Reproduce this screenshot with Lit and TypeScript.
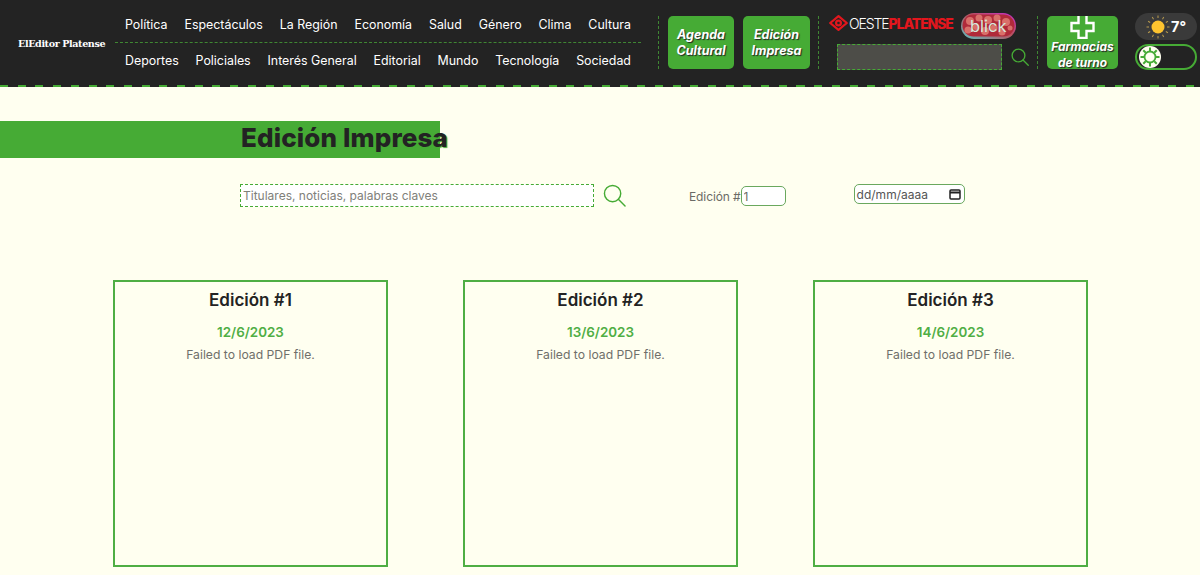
import { LitElement, html, css, svg } from 'lit';
import { customElement } from 'lit/decorators.js';

const rowOne = ['Política', 'Espectáculos', 'La Región', 'Economía', 'Salud', 'Género', 'Clima', 'Cultura'];
const rowTwo = ['Deportes', 'Policiales', 'Interés General', 'Editorial', 'Mundo', 'Tecnología', 'Sociedad'];

const editions = [
  { n: 1, date: '12/6/2023' },
  { n: 2, date: '13/6/2023' },
  { n: 3, date: '14/6/2023' },
];

const lens = (size: number, width: number) => html`
  <svg width=${size} height=${size} viewBox="0 0 24 24" fill="none" stroke="#46ab35" stroke-width=${width} stroke-linecap="round">
    <circle cx="10" cy="10" r="8.5"></circle>
    <path d="M16 16l7 7"></path>
  </svg>
`;

const eightRays = [0, 45, 90, 135, 180, 225, 270, 315];
const twelveRays = [0, 30, 60, 90, 120, 150, 180, 210, 240, 270, 300, 330];

// blobs of the blick pill, x / y / radius
const blobs = [
  [9, 8, 4], [18, 5, 3.5], [27, 7, 4], [36, 5, 3.5], [45, 9, 4],
  [7, 17, 3.5], [15, 14, 3], [24, 18, 4], [33, 15, 3.5], [41, 19, 3.5], [49, 15, 2.5],
];

@customElement('app-root')
export class AppRoot extends LitElement {
  static styles = css`
    :host {
      display: block;
      height: 575px;
      overflow: hidden;
      background: #fffff0;
      font-family: 'Inter', 'Liberation Sans', sans-serif;
    }

    .header {
      display: flex;
      height: 85px;
      background: #232323;
    }

    .stripe {
      height: 2px;
      background: repeating-linear-gradient(90deg, #46ab35 0 8px, #232323 8px 17.7px);
    }

    .brand {
      width: 115px;
      flex: none;
      box-sizing: border-box;
      padding: 37px 0 0 18px;
      font-family: 'DejaVu Serif', 'Liberation Serif', serif;
      font-weight: 700;
      font-size: 9.6px;
      letter-spacing: -0.4px;
      line-height: 13px;
      color: #fff;
      white-space: nowrap;
    }

    .nav {
      width: 526px;
      flex: none;
    }

    .nav-row {
      display: flex;
      justify-content: space-between;
      align-items: center;
      height: 36px;
      padding: 0 10px;
      margin-top: 6px;
      box-sizing: border-box;
      color: #fff;
      font-size: 12.4px;
      white-space: nowrap;
    }

    .nav-row + .nav-row {
      margin-top: 0;
      height: 35px;
      border-top: 1px dashed #3f8733;
    }

    .sep {
      flex: none;
      width: 0;
      height: 53px;
      margin-top: 16px;
      border-left: 1px dashed #3f8733;
    }

    .action {
      flex: none;
      display: flex;
      align-items: center;
      justify-content: center;
      text-align: center;
      height: 53px;
      margin-top: 16px;
      border-radius: 5px;
      background: #46ab35;
      color: #fff;
      font-weight: 700;
      font-style: italic;
      font-size: 12.5px;
      line-height: 16px;
      text-shadow: 1px 1px 1px #232323;
    }

    .agenda { width: 66px; margin-left: 9px; }
    .impresa { width: 67px; margin: 16px 8px 0 9px; }

    .partners {
      flex: none;
      width: 218px;
      padding: 0 0 0 10px;
      box-sizing: border-box;
    }

    .logos {
      display: flex;
      align-items: flex-start;
      height: 26px;
      margin-top: 13px;
    }

    .oeste {
      display: flex;
      align-items: center;
      gap: 1px;
      height: 20px;
      font-size: 14px;
      letter-spacing: -1.1px;
      font-weight: 300;
      color: #fff;
      white-space: nowrap;
    }

    .oeste b {
      color: #e3161d;
      font-weight: 800;
    }

    .blick {
      position: relative;
      width: 55px;
      height: 26px;
      margin-left: 8px;
      flex: none;
    }

    .blick span {
      position: absolute;
      inset: 0;
      text-align: center;
      line-height: 26px;
      font-size: 16.5px;
      font-weight: 400;
      color: #d5e8dc;
    }

    .top-search {
      display: flex;
      align-items: center;
      gap: 9px;
      margin: 5px 0 0 8px;
    }

    .top-search .box {
      width: 165px;
      height: 26px;
      box-sizing: border-box;
      background: #4d4d48;
      border: 1px dashed #46ab35;
    }

    .pharmacy {
      position: relative;
      width: 71px;
      margin-left: 9px;
      padding-top: 25px;
      box-sizing: border-box;
      line-height: 16px;
      font-size: 12px;
    }

    .pharmacy svg {
      position: absolute;
      top: -1px;
      left: 23px;
    }

    .side {
      flex: none;
      width: 62px;
      margin-left: 17px;
    }

    .weather {
      display: flex;
      align-items: center;
      height: 27px;
      margin-top: 13px;
      padding-left: 11px;
      gap: 1px;
      box-sizing: border-box;
      border-radius: 14px;
      background: #3a3a3a;
      color: #fff;
      font-size: 14.5px;
      font-weight: 700;
    }

    .toggle {
      display: flex;
      align-items: center;
      height: 26px;
      margin-top: 4px;
      padding-left: 2px;
      box-sizing: border-box;
      border: 2px solid #46ab35;
      border-radius: 13px;
    }

    .banner {
      margin-top: 34px;
      width: 440px;
      height: 37px;
      box-sizing: border-box;
      padding-left: 241px;
      background: #46ab35;
      color: #232323;
      font-size: 26px;
      font-weight: 800;
      line-height: 33px;
      white-space: nowrap;
      text-shadow: 1px 1px 1px #46ab35;
      letter-spacing: 0.13px;
    }

    .filters {
      display: flex;
      align-items: flex-start;
      margin: 26px 0 0 240px;
      height: 23px;
      font-size: 12px;
      color: #6b6b66;
    }

    .query {
      flex: none;
      width: 354px;
      height: 23px;
      box-sizing: border-box;
      padding: 0 2px;
      border: 1px dashed #46ab35;
      background: #fff;
      font: inherit;
      color: inherit;
      outline: none;
    }

    .query::placeholder {
      color: #80807a;
      opacity: 1;
    }

    .go {
      flex: none;
      margin-left: 9px;
      height: 23px;
    }

    .label {
      display: flex;
      align-items: center;
      margin: 2px 0 0 63px;
      height: 20px;
      letter-spacing: -0.1px;
    }

    .num {
      width: 45px;
      height: 20px;
      box-sizing: border-box;
      padding: 0 2px;
      border: 1.5px solid #6aa85e;
      border-radius: 5px;
      background: #fff;
      font: inherit;
      color: inherit;
      outline: none;
    }

    .date {
      display: flex;
      align-items: center;
      justify-content: space-between;
      width: 111px;
      height: 20px;
      margin-left: 68px;
      padding: 0 3px 0 2px;
      box-sizing: border-box;
      border: 1.5px solid #6aa85e;
      border-radius: 5px;
      background: #fff;
      color: #555;
    }

    .cards {
      display: flex;
      gap: 75px;
      margin: 73px 0 0 113px;
    }

    .card {
      flex: none;
      width: 275px;
      height: 287px;
      box-sizing: border-box;
      border: 2px solid #4fae44;
      text-align: center;
    }

    .card h3 {
      margin: 8px 0 0;
      font-size: 17px;
      line-height: 20px;
      font-weight: 600;
      color: #232323;
    }

    .card .when {
      margin-top: 14px;
      font-size: 13.4px;
      line-height: 16px;
      font-weight: 600;
      color: #4fae44;
    }

    .card .err {
      margin-top: 7px;
      font-size: 12.2px;
      line-height: 16px;
      color: #6f6f6a;
    }
  `;

  render() {
    return html`
      <div class="header">
        <div class="brand">ElEditor Platense</div>
        <div class="nav">
          <div class="nav-row">${rowOne.map((t) => html`<span>${t}</span>`)}</div>
          <div class="nav-row">${rowTwo.map((t) => html`<span>${t}</span>`)}</div>
        </div>
        <div class="sep" style="margin-left:17px"></div>
        <div class="action agenda"><span>Agenda<br />Cultural</span></div>
        <div class="action impresa"><span>Edición<br />Impresa</span></div>
        <div class="sep"></div>
        <div class="partners">
          <div class="logos">
            <div class="oeste">
              <svg width="19" height="16" viewBox="0 0 19 16" fill="none" stroke="#e3161d" stroke-linejoin="round">
                <path d="M1.200 8L9.500 1.200 17.800 8 9.500 14.800z" stroke-width="2.200"></path>
                <circle cx="9.500" cy="8" r="2.400" stroke-width="2.200"></circle>
              </svg>
              <span>OESTE<b>PLATENSE</b></span>
            </div>
            <div class="blick">
              <svg width="55" height="26" viewBox="0 0 55 26">
                <defs>
                  <linearGradient id="rim" x1="0" y1="1" x2="1" y2="0">
                    <stop offset="0" stop-color="#5fc0c0"></stop>
                    <stop offset="0.55" stop-color="#b8505e"></stop>
                    <stop offset="1" stop-color="#c92fd0"></stop>
                  </linearGradient>
                </defs>
                <rect width="55" height="26" rx="13" fill="url(#rim)"></rect>
                <rect x="1.500" y="1.500" width="52" height="22" rx="11" fill="#b02a3a"></rect>
                ${blobs.map(([x, y, r]) => svg`<circle cx=${x} cy=${y} r=${r} fill="#d9706a"></circle>`)}
              </svg>
              <span>blick</span>
            </div>
          </div>
          <div class="top-search">
            <div class="box"></div>
            ${lens(18, 1.8)}
          </div>
        </div>
        <div class="sep"></div>
        <div class="action pharmacy">
          <svg width="25" height="24" viewBox="0 0 25 24" fill="none" stroke="#fff" stroke-width="2.400">
            <path d="M8.500 1v7H1.500v8h7v7h8v-7h7V8h-7V1"></path>
          </svg>
          <span>Farmacias<br />de turno</span>
        </div>
        <div class="side">
          <div class="weather">
            <svg width="24" height="24" viewBox="0 0 24 24">
              <circle cx="12" cy="12" r="6.500" fill="#fdc32f"></circle>
              ${twelveRays.map(
                (a) => svg`<path d="M12 0.500V3" stroke="#b89a4e" stroke-width="1" transform="rotate(${a} 12 12)"></path>`
              )}
            </svg>
            <span>7°</span>
          </div>
          <div class="toggle">
            <svg width="22" height="22" viewBox="0 0 22 22">
              <circle cx="11" cy="11" r="11" fill="#fffff0"></circle>
              <circle cx="11" cy="11" r="5.500" fill="none" stroke="#46ab35" stroke-width="1.800"></circle>
              ${eightRays.map(
                (a) => svg`<path d="M11 1.500V5" stroke="#46ab35" stroke-width="2" transform="rotate(${a} 11 11)"></path>`
              )}
            </svg>
          </div>
        </div>
      </div>
      <div class="stripe"></div>

      <div class="banner">Edición Impresa</div>

      <div class="filters">
        <input class="query" placeholder="Titulares, noticias, palabras claves" />
        <div class="go">${lens(23, 1.5)}</div>
        <div class="label">Edición #<input class="num" value="1" /></div>
        <div class="date">
          <span>dd/mm/aaaa</span>
          <svg width="12" height="12" viewBox="0 0 12 12" fill="none" stroke="#222" stroke-width="1.500">
            <rect x="1" y="2" width="10" height="9" rx="1"></rect>
            <path d="M1 4.500h10" stroke-width="2"></path>
          </svg>
        </div>
      </div>

      <div class="cards">
        ${editions.map(
          (e) => html`
            <div class="card">
              <h3>Edición #${e.n}</h3>
              <div class="when">${e.date}</div>
              <div class="err">Failed to load PDF file.</div>
            </div>
          `
        )}
      </div>
    `;
  }
}
